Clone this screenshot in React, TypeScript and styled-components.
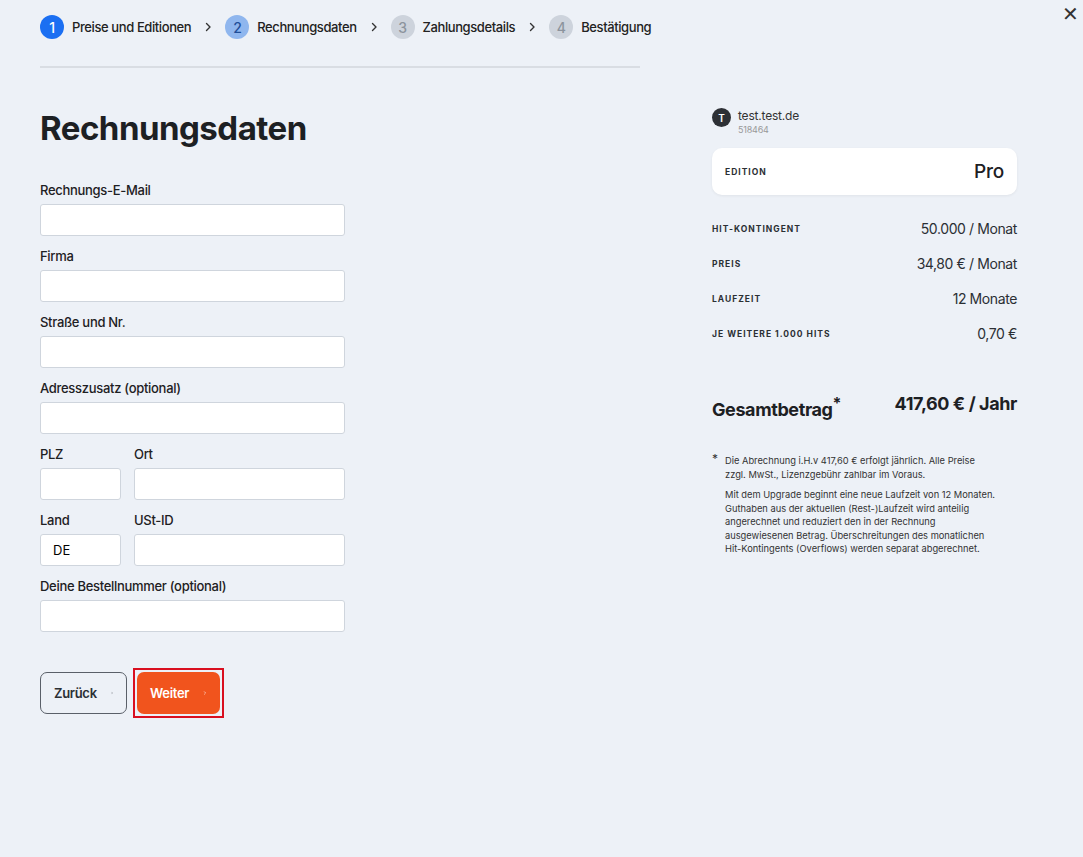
import React from "react";
import styled, { createGlobalStyle } from "styled-components";

const Global = createGlobalStyle`
  body { margin: 0; background: #edf1f7; font-family: Inter, "Noto Sans", sans-serif; color: #1d2023; letter-spacing: -0.2px; }
  * { box-sizing: border-box; }
`;

const Page = styled.div`
  width: 1083px;
  height: 857px;
  position: relative;
  display: flex;
  padding: 0 40px;
  gap: 72px;
`;

const Close = styled.div`
  position: absolute;
  top: 2px;
  right: 4px;
  font-size: 20px;
  color: #333;
`;

const Left = styled.div`
  width: 600px;
`;

const Stepper = styled.div`
  display: flex;
  align-items: center;
  border-bottom: 2px solid #d9dde3;
  margin-bottom: 40px;
  height: 68px;
  padding-bottom: 12px;
`;

const Step = styled.div`
  display: flex;
  align-items: center;
  gap: 8px;
  font-size: 13px;
  font-weight: 500;
  color: #222;
  white-space: nowrap;
  letter-spacing: -0.4px;
`;

const Num = styled.span<{ state: "done" | "active" | "todo" }>`
  width: 24px;
  height: 24px;
  border-radius: 50%;
  display: flex;
  align-items: center;
  justify-content: center;
  font-size: 14px;
  background: ${(p) => (p.state === "done" ? "#1b6ff2" : p.state === "active" ? "#8fb6ee" : "#cdd3dc")};
  color: ${(p) => (p.state === "done" ? "#fff" : p.state === "active" ? "#1f4e98" : "#8c939d")};
`;

const ChevronWrap = styled.span`
  display: flex;
  margin: 0 12px 0 12px;
  color: #333;
`;

const Chevron = ({ size = 10 }: { size?: number }) => (
  <svg width={size} height={size} viewBox="0 0 10 10" fill="none" stroke="currentColor" strokeWidth="1.4" strokeLinecap="round" strokeLinejoin="round">
    <path d="M3.5 1.5 L7 5 L3.5 8.5" />
  </svg>
);

const Title = styled.h1`
  margin: 0 0 34px;
  font-size: 33px;
  font-weight: 700;
  letter-spacing: -0.5px;
`;

const Form = styled.div`
  display: flex;
  flex-direction: column;
  gap: 12px;
  width: 305px;
`;

const Row = styled.div`
  display: flex;
  gap: 13px;
`;

const Field = styled.div<{ w?: number }>`
  display: flex;
  flex-direction: column;
  gap: 7px;
  width: ${(p) => (p.w ? `${p.w}px` : "100%")};
`;

const Label = styled.label`
  font-size: 13px;
  font-weight: 500;
  height: 15px;
  letter-spacing: -0.3px;
`;

const Input = styled.input`
  height: 32px;
  border: 1px solid #cfd5dd;
  border-radius: 3px;
  background: #fff;
  font-family: inherit;
  font-size: 13px;
  padding: 0 12px;
  width: 100%;
`;

const Buttons = styled.div`
  display: flex;
  gap: 6px;
  margin-top: 36px;
  align-items: center;
`;

const Btn = styled.button<{ primary?: boolean }>`
  height: 42px;
  padding: 0 13px;
  border-radius: 7px;
  font-family: inherit;
  font-size: 13px;
  font-weight: 600;
  letter-spacing: -0.3px;
  display: flex;
  align-items: center;
  gap: 14px;
  border: ${(p) => (p.primary ? "none" : "1.5px solid #5a6069")};
  background: ${(p) => (p.primary ? "#f1541d" : "transparent")};
  color: ${(p) => (p.primary ? "#fff" : "#2b2f34")};
  width: ${(p) => (p.primary ? "83px" : "87px")};
`;

const Highlight = styled.div`
  border: 2px solid #d90f1f;
  padding: 2px;
`;

const Right = styled.div`
  width: 305px;
  padding-top: 108px;
`;

const Account = styled.div`
  display: flex;
  gap: 7px;
  margin-bottom: 13px;
`;

const Avatar = styled.div`
  width: 19px;
  height: 19px;
  border-radius: 50%;
  background: #2d3035;
  color: #fff;
  font-size: 10px;
  font-weight: 600;
  display: flex;
  align-items: center;
  justify-content: center;
`;

const AccName = styled.div`
  font-size: 12px;
  color: #333;
  line-height: 16px;
  small { display: block; font-size: 9px; color: #999; line-height: 11px; }
`;

const Card = styled.div`
  background: #fff;
  border-radius: 10px;
  height: 47px;
  display: flex;
  align-items: center;
  justify-content: space-between;
  padding: 0 13px;
  box-shadow: 0 1px 3px rgba(0, 0, 0, 0.06);
  margin-bottom: 16px;
`;

const Caps = styled.span`
  font-size: 8.5px;
  font-weight: 700;
  letter-spacing: 1px;
  text-transform: uppercase;
  color: #2b2f34;
`;

const Pro = styled.span`
  font-size: 19px;
  font-weight: 500;
`;

const InfoRow = styled.div`
  display: flex;
  justify-content: space-between;
  align-items: center;
  height: 35px;
  font-size: 14px;
  color: #2b2f34;
  letter-spacing: -0.4px;
`;

const Total = styled.div`
  display: flex;
  justify-content: space-between;
  margin-top: 42px;
  font-size: 18px;
  font-weight: 700;
  letter-spacing: -0.4px;
  sup { font-size: 16px; }
`;

const Notes = styled.div`
  margin-top: 34px;
  font-size: 9.3px;
  line-height: 13.5px;
  color: #333;
  padding-left: 13px;
  padding-right: 20px;
  position: relative;
  letter-spacing: 0;
  p { margin: 0 0 7px; }
`;

const Star = styled.span`
  position: absolute;
  left: 0;
  top: -2px;
  font-size: 12px;
`;

export default function App() {
  const steps = ["Preise und Editionen", "Rechnungsdaten", "Zahlungsdetails", "Bestätigung"];
  const states: Array<"done" | "active" | "todo"> = ["done", "active", "todo", "todo"];
  const info = [
    ["Hit-Kontingent", "50.000 / Monat"],
    ["Preis", "34,80 € / Monat"],
    ["Laufzeit", "12 Monate"],
    ["Je weitere 1.000 Hits", "0,70 €"],
  ];
  return (
    <Page>
      <Global />
      <Close>✕</Close>
      <Left>
        <Stepper>
          {steps.map((s, i) => (
            <React.Fragment key={s}>
              <Step>
                <Num state={states[i]}>{i + 1}</Num>
                {s}
              </Step>
              {i < 3 && <ChevronWrap><Chevron /></ChevronWrap>}
            </React.Fragment>
          ))}
        </Stepper>
        <Title>Rechnungsdaten</Title>
        <Form>
          <Field><Label>Rechnungs-E-Mail</Label><Input /></Field>
          <Field><Label>Firma</Label><Input /></Field>
          <Field><Label>Straße und Nr.</Label><Input /></Field>
          <Field><Label>Adresszusatz (optional)</Label><Input /></Field>
          <Row>
            <Field w={81}><Label>PLZ</Label><Input /></Field>
            <Field w={211}><Label>Ort</Label><Input /></Field>
          </Row>
          <Row>
            <Field w={81}><Label>Land</Label><Input defaultValue="DE" /></Field>
            <Field w={211}><Label>USt-ID</Label><Input /></Field>
          </Row>
          <Field><Label>Deine Bestellnummer (optional)</Label><Input /></Field>
        </Form>
        <Buttons>
          <Btn>Zurück <Chevron /></Btn>
          <Highlight><Btn primary>Weiter <Chevron /></Btn></Highlight>
        </Buttons>
      </Left>
      <Right>
        <Account>
          <Avatar>T</Avatar>
          <AccName>test.test.de<small>518464</small></AccName>
        </Account>
        <Card><Caps>Edition</Caps><Pro>Pro</Pro></Card>
        {info.map(([k, v]) => (
          <InfoRow key={k}><Caps>{k}</Caps><span>{v}</span></InfoRow>
        ))}
        <Total><span>Gesamtbetrag<sup>*</sup></span><span>417,60 € / Jahr</span></Total>
        <Notes>
          <Star>*</Star>
          <p>Die Abrechnung i.H.v 417,60 € erfolgt jährlich. Alle Preise zzgl. MwSt., Lizenzgebühr zahlbar im Voraus.</p>
          <p>Mit dem Upgrade beginnt eine neue Laufzeit von 12 Monaten. Guthaben aus der aktuellen (Rest-)Laufzeit wird anteilig angerechnet und reduziert den in der Rechnung ausgewiesenen Betrag. Überschreitungen des monatlichen Hit-Kontingents (Overflows) werden separat abgerechnet.</p>
        </Notes>
      </Right>
    </Page>
  );
}
